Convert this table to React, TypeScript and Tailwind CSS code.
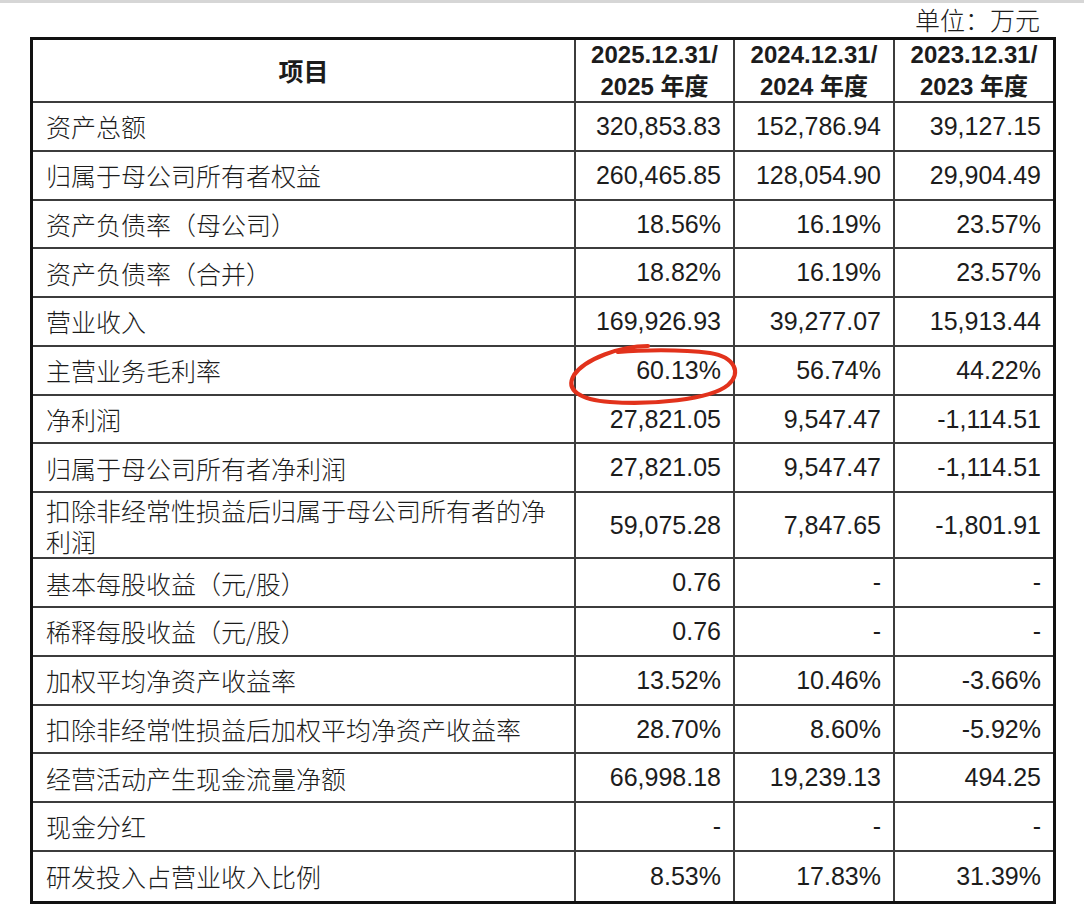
const ROWS: { label: string; values: [string, string, string]; tall?: boolean }[] = [
  { label: '资产总额', values: ['320,853.83', '152,786.94', '39,127.15'] },
  { label: '归属于母公司所有者权益', values: ['260,465.85', '128,054.90', '29,904.49'] },
  { label: '资产负债率（母公司）', values: ['18.56%', '16.19%', '23.57%'] },
  { label: '资产负债率（合并）', values: ['18.82%', '16.19%', '23.57%'] },
  { label: '营业收入', values: ['169,926.93', '39,277.07', '15,913.44'] },
  { label: '主营业务毛利率', values: ['60.13%', '56.74%', '44.22%'] },
  { label: '净利润', values: ['27,821.05', '9,547.47', '-1,114.51'] },
  { label: '归属于母公司所有者净利润', values: ['27,821.05', '9,547.47', '-1,114.51'] },
  { label: '扣除非经常性损益后归属于母公司所有者的净利润', values: ['59,075.28', '7,847.65', '-1,801.91'], tall: true },
  { label: '基本每股收益（元/股）', values: ['0.76', '-', '-'] },
  { label: '稀释每股收益（元/股）', values: ['0.76', '-', '-'] },
  { label: '加权平均净资产收益率', values: ['13.52%', '10.46%', '-3.66%'] },
  { label: '扣除非经常性损益后加权平均净资产收益率', values: ['28.70%', '8.60%', '-5.92%'] },
  { label: '经营活动产生现金流量净额', values: ['66,998.18', '19,239.13', '494.25'] },
  { label: '现金分红', values: ['-', '-', '-'] },
  { label: '研发投入占营业收入比例', values: ['8.53%', '17.83%', '31.39%'] },
]

const YEARS = ['2025', '2024', '2023']

export default function App() {
  return (
    <div className="relative w-[1084px] h-[911px] bg-white text-[#1c1c1c] overflow-hidden">
      <div className="h-[3px] bg-[#d6d6d6]" />

      {/* 单位 */}
      <div className="h-[34px] pr-[44px] flex items-center justify-end text-[25px] font-light font-['Noto_Sans_CJK_SC',sans-serif]">
        单位：万元
      </div>

      <div className="ml-[30px] w-[1026px] border-[3px] border-[#111]">
        {/* 表头 */}
        <div className="grid grid-cols-[543px_159px_160px_158px] h-[63px] border-b-2 border-[#3c3c3c]">
          <div className="flex items-center justify-center border-r-2 border-[#3c3c3c] text-[25px] font-bold font-['Noto_Sans_CJK_SC',sans-serif]">
            项目
          </div>
          {YEARS.map((y, i) => (
            <div
              key={y}
              className={`flex flex-col items-center justify-center text-[24px] leading-[30px] font-bold ${i < 2 ? 'border-r-2 border-[#3c3c3c]' : ''}`}
            >
              <span className="font-['Liberation_Sans',Arial,sans-serif]">{y}.12.31/</span>
              <span>
                <span className="font-['Liberation_Sans',Arial,sans-serif]">{y} </span>
                <span className="font-['Noto_Sans_CJK_SC',sans-serif]">年度</span>
              </span>
            </div>
          ))}
        </div>

        {ROWS.map((row, r) => (
          <div
            key={row.label}
            className={`grid grid-cols-[543px_159px_160px_158px] ${row.tall ? 'h-[66.3px]' : 'h-[48.75px]'} ${r < ROWS.length - 1 ? 'border-b-2 border-[#3c3c3c]' : ''}`}
          >
            <div className="flex items-center pl-[13px] pr-[13px] pt-[1px] border-r-2 border-[#3c3c3c] text-[25px] leading-[31px] font-light font-['Noto_Sans_CJK_SC',sans-serif]">
              {row.label}
            </div>
            {row.values.map((v, i) => (
              <div
                key={i}
                className={`flex items-center justify-end pr-[12px] pt-[1px] text-[25px] font-['Liberation_Sans',Arial,sans-serif] ${i < 2 ? 'border-r-2 border-[#3c3c3c]' : ''}`}
              >
                {v}
              </div>
            ))}
          </div>
        ))}
      </div>

      {/* 红笔圈注 */}
      <svg className="absolute left-[560px] top-[334px] pointer-events-none" width="190" height="82" viewBox="0 0 190 82" fill="none">
        <path
          d="M88 12 C60 12 25 25 14 41 C5 56 20 66 50 68 C90 71 150 66 168 51 C182 39 175 23 150 19 C120 15 80 16 58 18"
          stroke="#e2321c"
          strokeWidth="4.2"
          strokeLinecap="round"
        />
      </svg>
    </div>
  )
}
